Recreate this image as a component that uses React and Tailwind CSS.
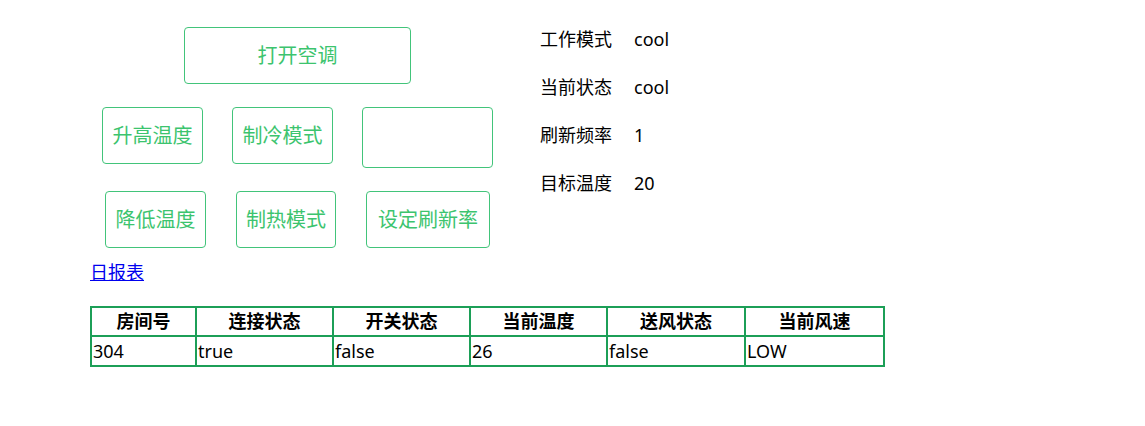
import React from "react";

const font = { fontFamily: '"Noto Sans", "Noto Sans CJK SC", sans-serif' };

const status = [
  { label: "工作模式", value: "cool" },
  { label: "当前状态", value: "cool" },
  { label: "刷新频率", value: "1" },
  { label: "目标温度", value: "20" },
];

const columns = [
  { title: "房间号", w: "w-[105px]" },
  { title: "连接状态", w: "w-[137px]" },
  { title: "开关状态", w: "w-[137px]" },
  { title: "当前温度", w: "w-[137px]" },
  { title: "送风状态", w: "w-[138px]" },
  { title: "当前风速", w: "w-[139px]" },
];

const row = ["304", "true", "false", "26", "false", "LOW"];

const btn =
  "h-[57px] rounded-[4px] border border-[#42c47a] bg-white text-[#3cc46e] text-[20px] flex items-center justify-center";

const App = () => {
  return (
    <div className="bg-white min-h-[426px] pl-[90px] pt-[27px] text-black" style={font}>
      <div className="flex">
        {/* control buttons */}
        <div className="w-[415px] flex flex-col gap-[23px]">
          <div className="flex justify-center">
            <button className={`${btn} w-[227px]`}>打开空调</button>
          </div>
          <div className="flex justify-center items-start gap-[29px]">
            <button className={`${btn} w-[101px]`}>升高温度</button>
            <button className={`${btn} w-[101px]`}>制冷模式</button>
            <input className="w-[131px] h-[61px] rounded-[4px] border border-[#42c47a] bg-white outline-none" />
          </div>
          <div className="flex justify-center gap-[30px]">
            <button className={`${btn} w-[101px]`}>降低温度</button>
            <button className={`${btn} w-[100px]`}>制热模式</button>
            <button className={`${btn} w-[124px]`}>设定刷新率</button>
          </div>
        </div>

        {/* status */}
        <div className="ml-[35px] flex flex-col gap-[24px] text-[18px] leading-[24px]">
          {status.map((s) => (
            <div key={s.label} className="flex">
              <span className="w-[94px]">{s.label}</span>
              <span>{s.value}</span>
            </div>
          ))}
        </div>
      </div>

      <a href="#" className="block mt-[12px] w-fit text-[18px] leading-[24px] text-[#0000ee] underline">
        日报表
      </a>

      <table className="mt-[22px] w-[793px] table-fixed border-collapse text-[18px]">
        <thead>
          <tr className="h-[29px]">
            {columns.map((c) => (
              <th key={c.title} className={`${c.w} border-2 border-[#1c9f57] p-0 font-bold text-center leading-[25px]`}>
                {c.title}
              </th>
            ))}
          </tr>
        </thead>
        <tbody>
          <tr className="h-[30px]">
            {row.map((v, i) => (
              <td key={i} className="border-2 border-[#1c9f57] p-0 pl-[1px] text-left leading-[26px]">
                {v}
              </td>
            ))}
          </tr>
        </tbody>
      </table>
    </div>
  );
};

export default App;
